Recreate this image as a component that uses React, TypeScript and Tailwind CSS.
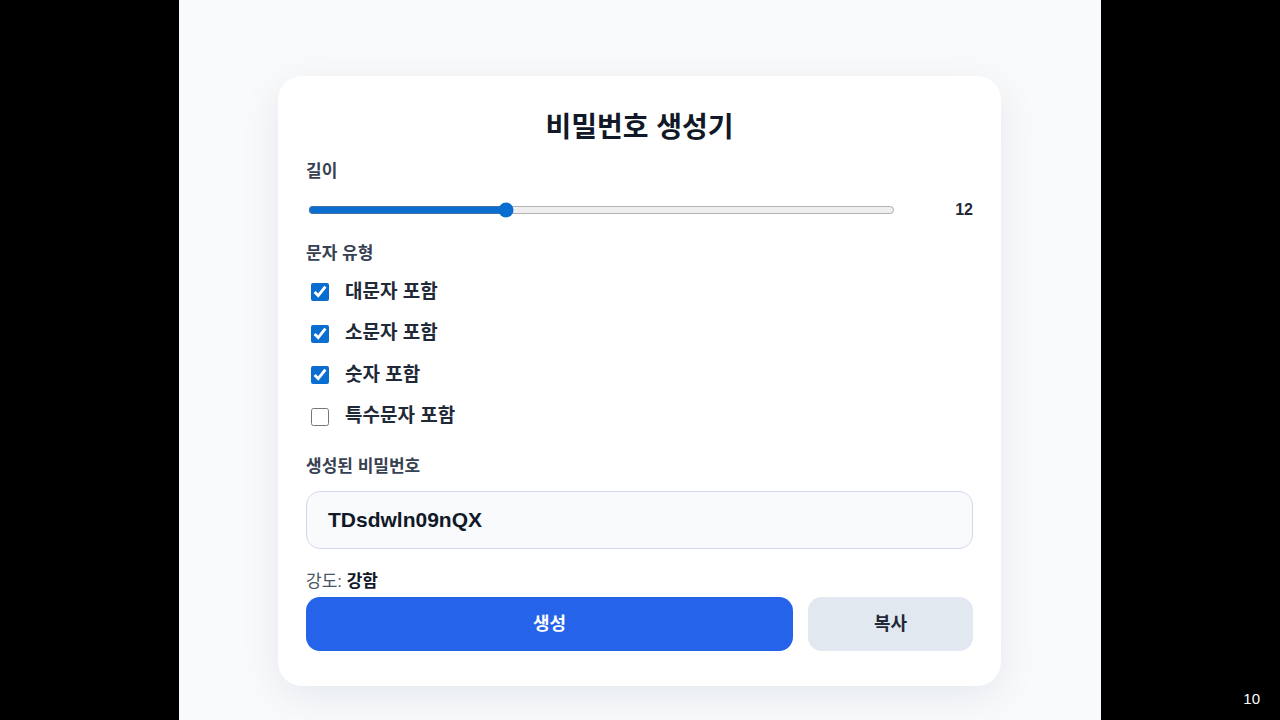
import React, { useState } from 'react'

const font = { fontFamily: '"Liberation Sans", "Noto Sans CJK KR", sans-serif' }

const options = [
  { key: 'upper', label: '대문자 포함', on: true },
  { key: 'lower', label: '소문자 포함', on: true },
  { key: 'digit', label: '숫자 포함', on: true },
  { key: 'symbol', label: '특수문자 포함', on: false },
]

const App = () => {
  const [length, setLength] = useState(12)
  const [checks, setChecks] = useState<Record<string, boolean>>(
    Object.fromEntries(options.map((o) => [o.key, o.on]))
  )

  return (
    <div className="relative flex h-[720px] w-[1280px] justify-center bg-black" style={font}>
      <div className="flex h-full w-[922px] bg-[#f8fafc] pl-[99px] pt-[76px]">
        <div className="flex h-[610px] w-[723px] flex-col rounded-[24px] bg-white px-7 pt-[35px] shadow-[0_10px_40px_rgba(15,23,42,0.08)]">
          <h1 className="h-[34px] text-center text-[28px] font-bold leading-[34px] text-[#111827]">
            비밀번호 생성기
          </h1>

          <div className="mt-[15px] h-[24px] text-[17px] font-semibold leading-[24px] text-[#374151]">
            길이
          </div>
          <div className="mt-[14px] flex h-[24px] items-center">
            <input
              type="range"
              min={4}
              max={28}
              value={length}
              onChange={(e) => setLength(Number(e.target.value))}
              className="ml-[2px] w-[587px] accent-[#0a6ed1]"
            />
            <span className="flex-1 text-right text-[16px] font-semibold text-[#1f2937]">{length}</span>
          </div>

          <div className="mt-[20px] h-[24px] text-[17px] font-semibold leading-[24px] text-[#374151]">
            문자 유형
          </div>
          <div className="mt-[14px] flex flex-col gap-[17.5px]">
            {options.map((o) => (
              <label key={o.key} className="flex h-[24px] items-center">
                <input
                  type="checkbox"
                  checked={checks[o.key]}
                  onChange={() => setChecks({ ...checks, [o.key]: !checks[o.key] })}
                  className="m-0 ml-[5px] h-[18px] w-[18px] accent-[#0a6ed1]"
                />
                <span className="ml-[16px] text-[19px] font-bold text-[#1f2937]">{o.label}</span>
              </label>
            ))}
          </div>

          <div className="mt-[26.5px] h-[24px] text-[17px] font-semibold leading-[24px] text-[#374151]">
            생성된 비밀번호
          </div>
          <div className="mt-[12px] flex h-[58px] items-center rounded-[14px] border border-[#d3d8ee] bg-[#f8fafc] px-[21px] text-[21px] font-bold text-[#111827]">
            TDsdwln09nQX
          </div>

          <div className="mt-[21px] h-[24px] text-[17px] leading-[24px] text-[#4b5563]">
            강도: <span className="font-bold text-[#111827]">강함</span>
          </div>
          <div className="mt-[3px] flex h-[54px] gap-[15px]">
            <button className="flex-1 rounded-[14px] bg-[#2563eb] text-[18px] font-bold text-white">생성</button>
            <button className="w-[165px] rounded-[14px] bg-[#e2e8f0] text-[18px] font-bold text-[#1f2937]">복사</button>
          </div>
        </div>
      </div>
      <span className="absolute bottom-[10px] right-[20px] text-[15px] text-white">10</span>
    </div>
  )
}

export default App
